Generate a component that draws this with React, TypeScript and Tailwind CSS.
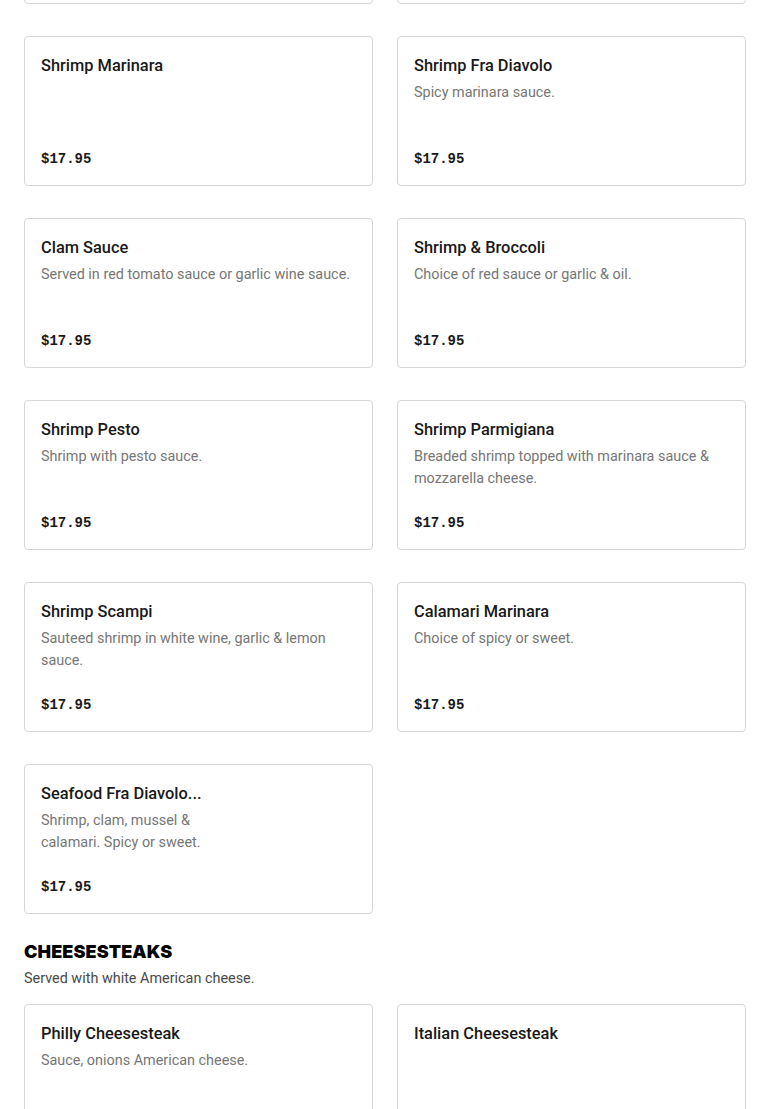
import React from "react";

type Item = { name: string; desc?: string; price?: string; narrow?: boolean };

const seafood: Item[] = [
  { name: "Shrimp Marinara", price: "$17.95" },
  { name: "Shrimp Fra Diavolo", desc: "Spicy marinara sauce.", price: "$17.95" },
  { name: "Clam Sauce", desc: "Served in red tomato sauce or garlic wine sauce.", price: "$17.95" },
  { name: "Shrimp & Broccoli", desc: "Choice of red sauce or garlic & oil.", price: "$17.95" },
  { name: "Shrimp Pesto", desc: "Shrimp with pesto sauce.", price: "$17.95" },
  {
    name: "Shrimp Parmigiana",
    desc: "Breaded shrimp topped with marinara sauce & mozzarella cheese.",
    price: "$17.95",
  },
  { name: "Shrimp Scampi", desc: "Sauteed shrimp in white wine, garlic & lemon sauce.", price: "$17.95" },
  { name: "Calamari Marinara", desc: "Choice of spicy or sweet.", price: "$17.95" },
  {
    name: "Seafood Fra Diavolo...",
    desc: "Shrimp, clam, mussel & calamari. Spicy or sweet.",
    price: "$17.95",
    narrow: true,
  },
];

// price line sits below the fold here
const cheesesteaks: Item[] = [
  { name: "Philly Cheesesteak", desc: "Sauce, onions American cheese." },
  { name: "Italian Cheesesteak" },
];

function MenuCard({ item }: { item: Item }) {
  return (
    <div className="flex h-[150px] flex-col rounded-[4px] border border-[#d6d6d6] bg-white px-4 pt-[17px] pb-4">
      <div className="text-[16.4px] leading-6 font-medium text-[#191919]">{item.name}</div>
      {item.desc && (
        <p
          className={`mt-1 text-[14.4px] leading-[22px] text-[#767676] ${item.narrow ? "max-w-[175px]" : ""}`}
        >
          {item.desc}
        </p>
      )}
      {item.price && (
        <div className="mt-auto font-['Liberation_Mono',monospace] text-[14px] leading-5 font-bold text-[#191919]">
          {item.price}
        </div>
      )}
    </div>
  );
}

export default function App() {
  return (
    <div
      className="h-[1109px] overflow-hidden bg-white px-6"
      style={{ fontFamily: "Roboto, 'Liberation Sans', sans-serif" }}
    >
      <div className="-mt-[146px] grid grid-cols-2 gap-x-6 gap-y-8">
        {/* previous row, scrolled mostly out of view */}
        <div className="h-[150px] rounded-[4px] border border-[#d6d6d6]" />
        <div className="h-[150px] rounded-[4px] border border-[#d6d6d6]" />
        {seafood.map((item, i) => (
          <MenuCard key={i} item={item} />
        ))}
      </div>

      <h2 className="mt-[26px] font-['Inter',sans-serif] text-[18px] leading-6 font-black tracking-[0.1px] text-black">
        CHEESESTEAKS
      </h2>
      <p className="mt-1 text-[14.4px] leading-[22px] text-[#494949]">Served with white American cheese.</p>

      <div className="mt-[14px] grid grid-cols-2 gap-x-6 gap-y-8">
        {cheesesteaks.map((item, i) => (
          <MenuCard key={i} item={item} />
        ))}
      </div>
    </div>
  );
}
